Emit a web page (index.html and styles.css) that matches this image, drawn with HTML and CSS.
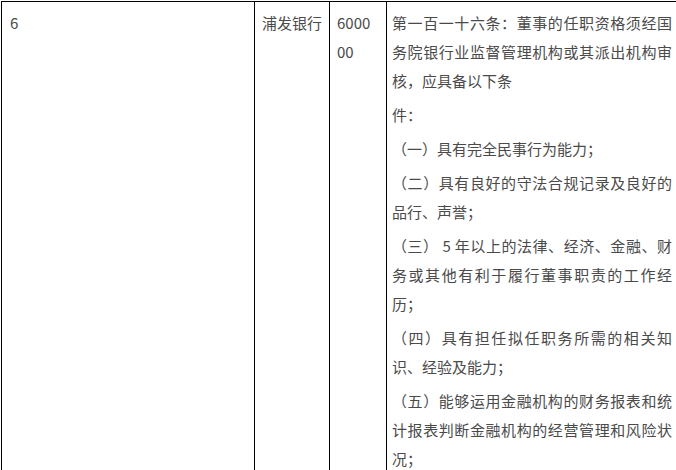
FILE: index.html
```html
<!DOCTYPE html>
<html lang="zh-CN">
<head>
<meta charset="utf-8">
<title>表格</title>
<link rel="stylesheet" href="styles.css">
</head>
<body>
<div class="page">
  <table class="grid">
    <colgroup>
      <col class="c-no">
      <col class="c-bank">
      <col class="c-num">
      <col class="c-text">
    </colgroup>
    <tbody>
      <tr>
        <td class="cell-no">6</td>
        <td class="cell-bank">浦发银行</td>
        <td class="cell-num">600000</td>
        <td class="cell-text">
          <p>第一百一十六条：董事的任职资格须经国务院银行业监督管理机构或其派出机构审核，应具备以下条</p>
          <p>件：</p>
          <p>（一）具有完全民事行为能力；</p>
          <p>（二）具有良好的守法合规记录及良好的品行、声誉；</p>
          <p>（三） 5 年以上的法律、经济、金融、财务或其他有利于履行董事职责的工作经历；</p>
          <p>（四）具有担任拟任职务所需的相关知识、经验及能力；</p>
          <p>（五）能够运用金融机构的财务报表和统计报表判断金融机构的经营管理和风险状况；</p>
        </td>
      </tr>
    </tbody>
  </table>
</div>
</body>
</html>
```

FILE: styles.css
```css
html, body {
  margin: 0;
  padding: 0;
  background: #ffffff;
  overflow: hidden;
  height: 470px;
}

.page {
  padding: 1px 0 0 1px;
  width: 700px;
}

.grid {
  table-layout: fixed;
  border-collapse: collapse;
  width: 676px;
  font-family: "Noto Sans CJK SC", "Noto Sans", sans-serif;
  font-size: 15px;
  line-height: 29px;
  color: #4a4a4a;
}

.c-no { width: 253px; }
.c-bank { width: 75px; }
.c-num { width: 57px; }
.c-text { width: 291px; }

.grid td {
  border: 1px solid #000000;
  vertical-align: top;
  padding: 6px 5px 0 5px;
}

.grid td.cell-no {
  padding-left: 8px;
}

.grid td.cell-bank {
  padding-left: 7px;
  padding-right: 4px;
}

.grid td.cell-num {
  padding-left: 7px;
  padding-right: 10px;
  word-break: break-all;
}

.grid td.cell-text {
  padding-left: 5px;
  padding-right: 5px;
  text-align: justify;
}

.cell-text p {
  margin: 0 0 5px 0;
}
```
